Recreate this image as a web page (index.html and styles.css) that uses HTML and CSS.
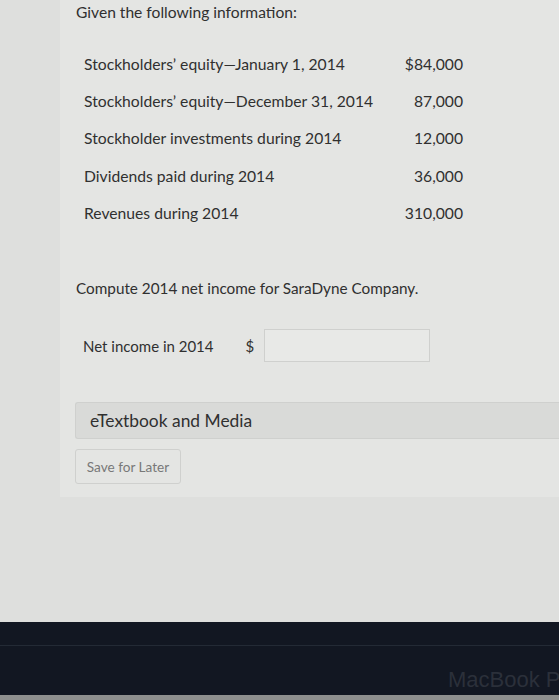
FILE: index.html
```html
<!DOCTYPE html>
<html>
<head>
<meta charset="utf-8">
<link rel="stylesheet" href="styles.css">
</head>
<body>
<div class="screen">
  <div class="panel">
    <p class="intro">Given the following information:</p>
    <div class="table">
      <div class="row"><span class="label">Stockholders’ equity—January 1, 2014</span><span class="val">$84,000</span></div>
      <div class="row"><span class="label">Stockholders’ equity—December 31, 2014</span><span class="val">87,000</span></div>
      <div class="row"><span class="label">Stockholder investments during 2014</span><span class="val">12,000</span></div>
      <div class="row"><span class="label">Dividends paid during 2014</span><span class="val">36,000</span></div>
      <div class="row"><span class="label">Revenues during 2014</span><span class="val">310,000</span></div>
    </div>
    <p class="question">Compute 2014 net income for SaraDyne Company.</p>
    <div class="answer">
      <span class="alabel">Net income in 2014</span>
      <span class="dollar">$</span>
      <span class="input"></span>
    </div>
    <div class="media">eTextbook and Media</div>
    <div class="save">Save for Later</div>
  </div>
</div>
<div class="bezel">
  <div class="bezel-line"></div>
  <div class="brand">MacBook P</div>
</div>
<div class="base"></div>
</body>
</html>
```
FILE: styles.css
```css
html, body { margin: 0; padding: 0; }
body {
  width: 559px;
  height: 700px;
  overflow: hidden;
  font-family: Lato, "Open Sans", sans-serif;
  color: #303030;
  background: #dfe0de;
}
.screen {
  height: 622px;
  background: #dedfdd;
  overflow: hidden;
}
.panel {
  margin-left: 60px;
  height: 497px;
  background: #e4e5e3;
  padding-left: 15px;
  box-sizing: border-box;
  padding-top: 1px;
}
.intro {
  margin: 0;
  padding-left: 1px;
  font-size: 15.6px;
  line-height: 20px;
  margin-top: 1px;
}
.table {
  margin-top: 23px;
  padding-left: 9px;
  width: 379px;
  display: flex;
  flex-direction: column;
}
.row {
  display: flex;
  justify-content: space-between;
  height: 37.3px;
  align-items: center;
  font-size: 15.7px;
}
.question {
  margin: 47px 0 0 1px;
  font-size: 15.3px;
  line-height: 20px;
}
.answer {
  margin-top: 31px;
  padding-left: 8px;
  display: flex;
  align-items: center;
  font-size: 15px;
}
.dollar { margin-left: 32px; }
.input {
  margin-left: 10px;
  width: 164px;
  height: 31px;
  border: 1px solid #cfd0ce;
  background: #e8e9e7;
}
.media {
  margin-top: 40px;
  height: 35px;
  border: 1px solid #cfd0ce;
  border-right: none;
  border-radius: 3px 0 0 3px;
  background: #d9dad8;
  font-size: 17.4px;
  display: flex;
  align-items: center;
  padding-left: 14px;
}
.save {
  margin-top: 10px;
  width: 104px;
  height: 33px;
  border: 1px solid #cfd0ce;
  border-radius: 3px;
  font-size: 13.6px;
  color: #787878;
  display: flex;
  align-items: center;
  justify-content: center;
}
.bezel {
  height: 73px;
  background: #121722;
  position: relative;
  overflow: hidden;
}
.bezel-line {
  height: 1px;
  background: #232a35;
  margin-top: 23px;
}
.brand {
  position: absolute;
  left: 448px;
  top: 45px;
  font-family: "Liberation Sans", Arial, sans-serif;
  font-size: 22px;
  color: #2b303a;
  white-space: nowrap;
}
.base {
  height: 5px;
  background: #8e8f8e;
}
```
